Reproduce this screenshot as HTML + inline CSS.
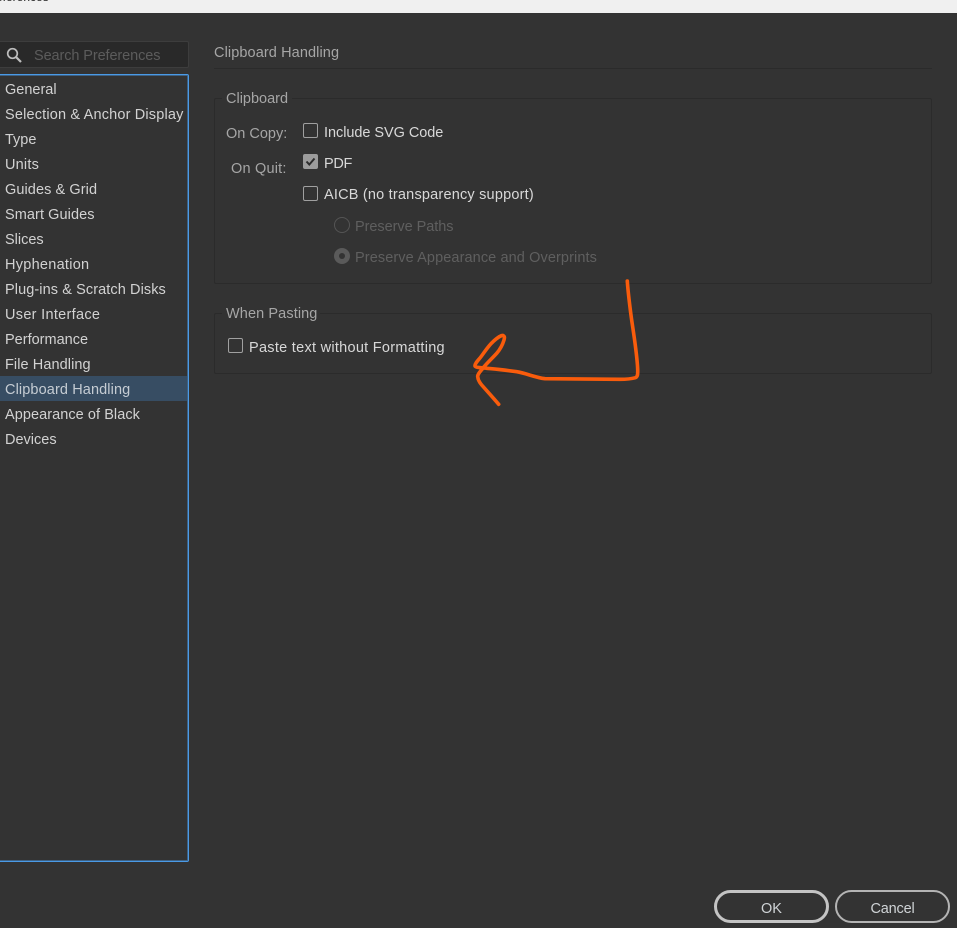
<!DOCTYPE html>
<html><head><meta charset="utf-8">
<style>
html,body{margin:0;padding:0;background:#333333;}
#p{position:relative;width:957px;height:928px;overflow:hidden;background:#333333;font-family:"Liberation Sans",sans-serif;font-size:14.5px;color:#cfcfcf;}
#p div,#p span.t{position:absolute;white-space:nowrap;box-sizing:border-box;}
.t{line-height:18px;}
.l{left:5px;color:#d2d2d2;}
.cb{width:15px;height:15px;border:1px solid #a0a0a0;border-radius:2px;}
.g{color:#a6a6a6;}
.d{color:#5f5f5f;}
.w{color:#d8d8d8;}
</style></head><body><div id="p">
<div style="left:0;top:0;width:957px;height:13px;background:#f0f0f0"></div>
<span class="t" style="left:-16px;top:-12px;color:#222;font-size:12px">Preferences</span>

<div style="left:-4px;top:41px;width:193px;height:27px;background:#292929;border:1px solid #3d3d3d;border-radius:2px"></div>
<svg style="position:absolute;left:4px;top:45px" width="20" height="20" viewBox="0 0 20 20"><circle cx="8.5" cy="8.5" r="4.8" fill="none" stroke="#bdbdbd" stroke-width="1.7"/><path d="M12 12L17 17" stroke="#bdbdbd" stroke-width="2.2" fill="none"/></svg>
<span class="t" style="left:34px;top:47px;color:#5c5c5c;letter-spacing:-.1px">Search Preferences</span>

<div style="left:-4px;top:74px;width:193px;height:788px;border:1px solid #4a9ae6;box-shadow:inset 0 0 0 1px rgba(74,154,230,.45);border-radius:2px"></div>
<div style="left:0;top:376px;width:187px;height:25px;background:#374d63"></div>
<span class="t l" style="top:81px">General</span>
<span class="t l" style="top:106px;letter-spacing:.17px">Selection &amp; Anchor Display</span>
<span class="t l" style="top:131px">Type</span>
<span class="t l" style="top:156px;letter-spacing:.2px">Units</span>
<span class="t l" style="top:181px;letter-spacing:.08px">Guides &amp; Grid</span>
<span class="t l" style="top:206px;letter-spacing:.08px">Smart Guides</span>
<span class="t l" style="top:231px">Slices</span>
<span class="t l" style="top:256px;letter-spacing:.27px">Hyphenation</span>
<span class="t l" style="top:281px;letter-spacing:.09px">Plug-ins &amp; Scratch Disks</span>
<span class="t l" style="top:306px;letter-spacing:.3px">User Interface</span>
<span class="t l" style="top:331px">Performance</span>
<span class="t l" style="top:356px;letter-spacing:.08px">File Handling</span>
<span class="t l" style="top:381px;color:#c5ccd3;letter-spacing:.11px">Clipboard Handling</span>
<span class="t l" style="top:406px;letter-spacing:.06px">Appearance of Black</span>
<span class="t l" style="top:431px">Devices</span>

<span class="t g" style="left:214px;top:44px;letter-spacing:.1px">Clipboard Handling</span>
<div style="left:214px;top:68px;width:718px;height:1px;background:#2b2b2b"></div>

<div style="left:214px;top:98px;width:718px;height:186px;border:1px solid #2b2b2b;border-radius:2px"></div>
<div style="left:222px;top:90px;width:70px;height:18px;background:#333"></div>
<span class="t g" style="left:226px;top:90px">Clipboard</span>
<span class="t g" style="left:226px;top:125px">On Copy:</span>
<span class="t g" style="left:231px;top:160px;letter-spacing:.2px">On Quit:</span>

<div class="cb" style="left:303px;top:123px"></div>
<span class="t w" style="left:324px;top:124px;letter-spacing:-.05px">Include SVG Code</span>
<div class="cb" style="left:303px;top:154px;background:#9c9c9c;border-color:#9c9c9c"></div>
<svg style="position:absolute;left:303px;top:154px" width="15" height="15" viewBox="0 0 15 15"><path d="M3.5 7.5L6.3 10.5L11.5 4.5" fill="none" stroke="#2c2c2c" stroke-width="2"/></svg>
<span class="t w" style="left:324px;top:155px;letter-spacing:-.3px">PDF</span>
<div class="cb" style="left:303px;top:186px"></div>
<span class="t w" style="left:324px;top:186px;letter-spacing:.2px">AICB (no transparency support)</span>

<div style="left:334px;top:217px;width:16px;height:16px;border:1.5px solid #555;border-radius:50%"></div>
<span class="t d" style="left:355px;top:218px;letter-spacing:-.05px">Preserve Paths</span>
<div style="left:334px;top:248px;width:16px;height:16px;background:#5a5a5a;border-radius:50%"></div>
<div style="left:339px;top:253px;width:6px;height:6px;background:#333;border-radius:50%"></div>
<span class="t d" style="left:355px;top:249px;letter-spacing:.1px">Preserve Appearance and Overprints</span>

<div style="left:214px;top:313px;width:718px;height:61px;border:1px solid #2b2b2b;border-radius:2px"></div>
<div style="left:222px;top:305px;width:98px;height:18px;background:#333"></div>
<span class="t g" style="left:226px;top:305px;letter-spacing:.1px">When Pasting</span>
<div class="cb" style="left:228px;top:338px"></div>
<span class="t w" style="left:249px;top:339px;letter-spacing:.28px">Paste text without Formatting</span>

<svg style="position:absolute;left:0;top:0" width="957" height="928" viewBox="0 0 957 928"><path d="M627.3 281C628 292 629.5 303 630.7 313C632 323 633.7 333 635 343C636.3 353 637.5 362 637.7 370C637.8 375 637.5 377 635 377.8C630 379.2 626 379.3 620 379.3L545 378.7C535 377.5 527 373.5 516.7 371.7C507 370.2 497 369.3 486.7 368.3C481 367.7 475.5 367.5 475 366C474.7 364 477 361.5 480 358C484 353 488 346 493 341.7C497 338 501.5 335 503 335.5C505 336.5 504.5 338 504 340C502.5 345 500 349.5 496.7 353.3C492 358.5 487 363 483 368C480 372 477.5 374 477.7 376.7C478 380 480 383 481.7 385C487 391 493 397.5 498.7 404.3" fill="none" stroke="#f95c0c" stroke-width="3.6" stroke-linecap="round" stroke-linejoin="round"/></svg>

<div style="left:714px;top:890px;width:115px;height:33px;border:3px solid #c4c4c4;border-radius:17px"></div>
<span class="t" style="left:714px;top:900px;width:115px;text-align:center;color:#cfd3d6">OK</span>
<div style="left:835px;top:890px;width:115px;height:33px;border:2px solid #b4b4b4;border-radius:17px"></div>
<span class="t" style="left:835px;top:900px;width:115px;text-align:center;color:#cfd3d6;letter-spacing:-.2px">Cancel</span>
</div></body></html>
